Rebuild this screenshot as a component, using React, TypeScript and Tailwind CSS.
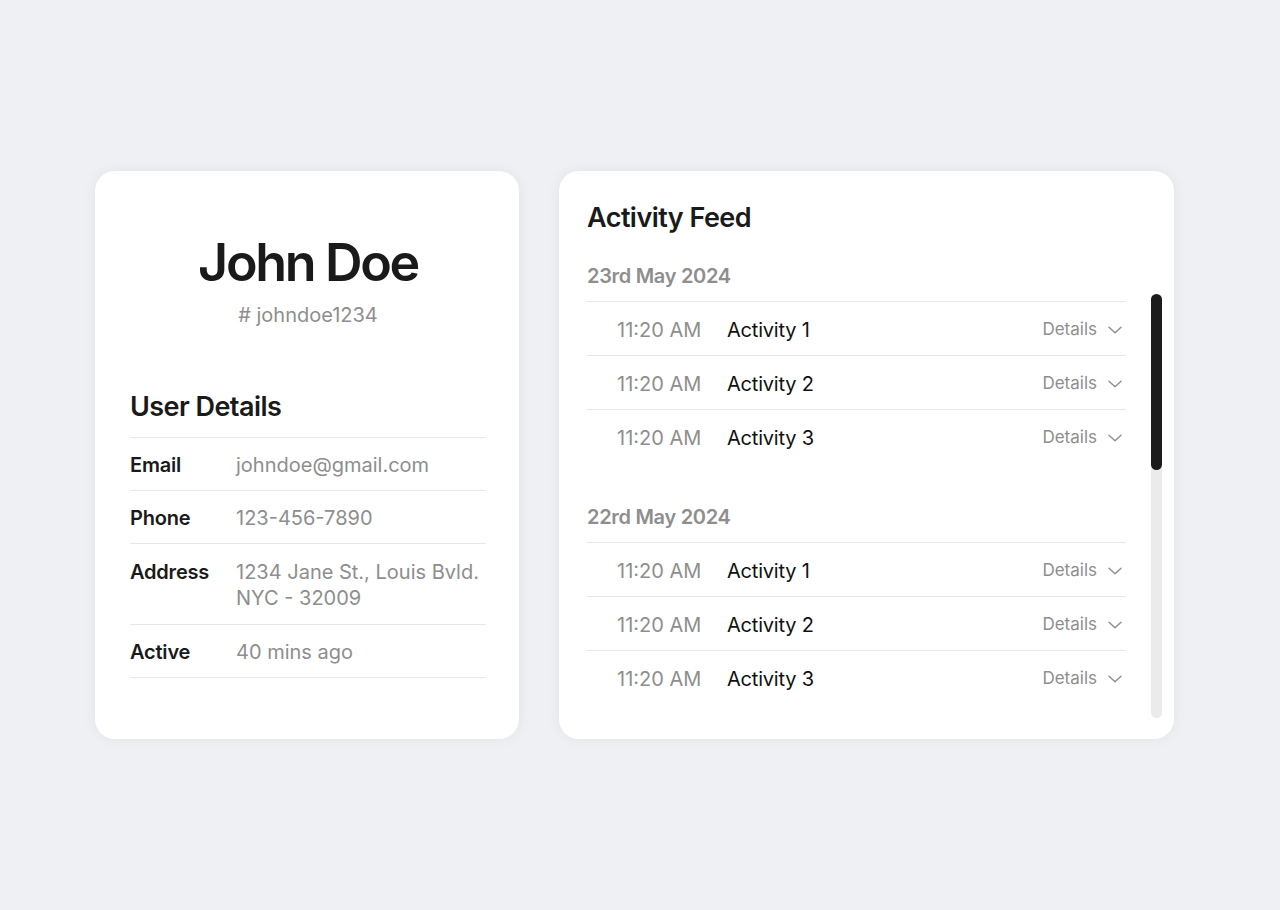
type Detail = { label: string; value: string[] };

const details: Detail[] = [
  { label: 'Email', value: ['johndoe@gmail.com'] },
  { label: 'Phone', value: ['123-456-7890'] },
  { label: 'Address', value: ['1234 Jane St., Louis Bvld.', 'NYC - 32009'] },
  { label: 'Active', value: ['40 mins ago'] },
];

type Day = { date: string; items: { time: string; title: string }[] };

const feed: Day[] = [
  {
    date: '23rd May 2024',
    items: [
      { time: '11:20 AM', title: 'Activity 1' },
      { time: '11:20 AM', title: 'Activity 2' },
      { time: '11:20 AM', title: 'Activity 3' },
    ],
  },
  {
    date: '22rd May 2024',
    items: [
      { time: '11:20 AM', title: 'Activity 1' },
      { time: '11:20 AM', title: 'Activity 2' },
      { time: '11:20 AM', title: 'Activity 3' },
    ],
  },
];

function Chevron() {
  return (
    <svg width="14" height="8" viewBox="0 0 14 8" fill="none" className="text-[#8e8e8e]">
      <path d="M1 1.2 7 6.8 13 1.2" stroke="currentColor" strokeWidth="1.4" strokeLinecap="round" strokeLinejoin="round" />
    </svg>
  );
}

function UserCard() {
  return (
    <div className="h-[568px] w-[424px] rounded-[20px] bg-white pl-[35px] pr-[33px] pt-[61px] shadow-[0_0_14px_rgba(0,0,0,0.06)]">
      {/* Name */}
      <div className="flex flex-col items-center">
        <h1 className="text-[52px] font-semibold leading-[62px] tracking-[-0.045em] text-[#1a1a1a]">John Doe</h1>
        <p className="mt-[7px] text-[20px] leading-[28px] text-[#8e8e8e]"># johndoe1234</p>
      </div>

      {/* Details */}
      <h2 className="mt-[60px] pb-3 text-[27px] font-semibold leading-[36px] tracking-[-0.02em] text-[#1a1a1a]">
        User Details
      </h2>
      <div className="border-b border-[#e6e6e6]">
        {details.map((d) => (
          <div
            key={d.label}
            className={`flex border-t border-[#e6e6e6] text-[20px] leading-[26px] ${d.value.length > 1 ? 'pb-[13px] pt-[15px]' : 'pb-[12px] pt-[14px]'}`}
          >
            <span className="w-[106px] shrink-0 font-semibold tracking-[-0.01em] text-[#1a1a1a]">{d.label}</span>
            <span className="text-[#8e8e8e]">
              {d.value.map((v) => (
                <span key={v} className="block">
                  {v}
                </span>
              ))}
            </span>
          </div>
        ))}
      </div>
    </div>
  );
}

function FeedCard() {
  return (
    <div className="flex h-[568px] w-[615px] rounded-[20px] bg-white pb-[21px] pl-[28px] pr-[12px] pt-[29px] shadow-[0_0_14px_rgba(0,0,0,0.06)]">
      <div className="flex w-[539px] flex-col">
        <h2 className="text-[27px] font-semibold leading-[36px] tracking-[-0.02em] text-[#1a1a1a]">Activity Feed</h2>

        <div className="mt-[25px] h-[457px] overflow-hidden">
          <div className="flex flex-col gap-[39px]">
            {feed.map((day) => (
              <section key={day.date}>
                <h3 className="pb-[11px] pt-px text-[20px] font-semibold leading-[28px] tracking-[-0.015em] text-[#8e8e8e]">
                  {day.date}
                </h3>
                {day.items.map((item) => (
                  <div
                    key={item.title}
                    className="flex h-[54px] items-center border-t border-[#e6e6e6] pl-[30px] pr-1 pt-[2px] text-[20px]"
                  >
                    <span className="w-[110px] shrink-0 text-[#8e8e8e]">{item.time}</span>
                    <span className="flex-1 tracking-[-0.01em] text-[#111111]">{item.title}</span>
                    <span className="flex items-center gap-[11px] text-[17px] text-[#8e8e8e]">
                      Details
                      <Chevron />
                    </span>
                  </div>
                ))}
              </section>
            ))}
          </div>
        </div>
      </div>

      {/* Scrollbar */}
      <div className="ml-[25px] mt-[94px] h-[424px] w-[11px] rounded-full bg-[#ebebeb]">
        <div className="h-[176px] w-full rounded-full bg-[#1c1c1c]" />
      </div>
    </div>
  );
}

export default function App() {
  return (
    <div className="flex h-[910px] items-center justify-center gap-[40px] bg-[#eef0f4] pr-[11px] font-['Inter',sans-serif]">
      <UserCard />
      <FeedCard />
    </div>
  );
}
